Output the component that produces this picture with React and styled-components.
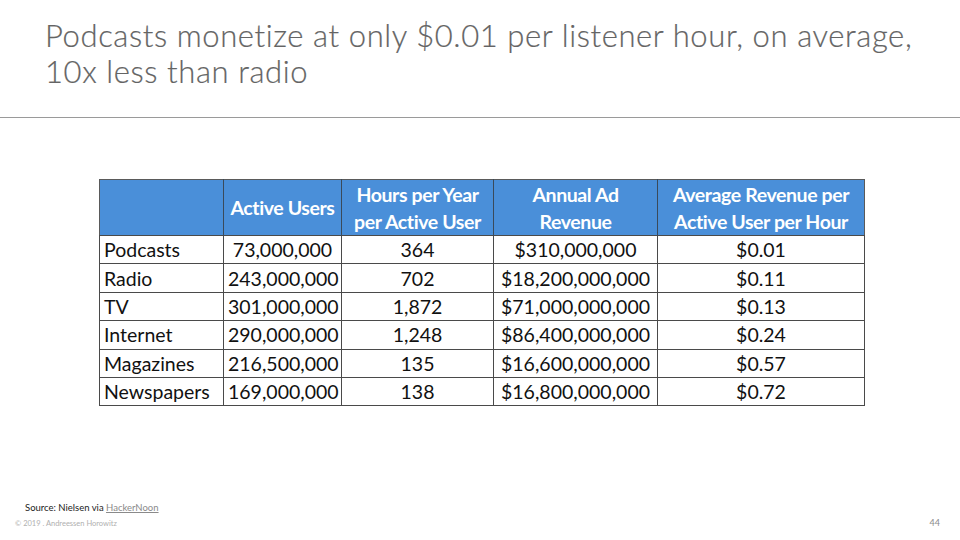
import styled, { createGlobalStyle } from 'styled-components';

const GlobalStyle = createGlobalStyle`
  html, body {
    margin: 0;
    padding: 0;
    background: #ffffff;
  }
`;

const rows = [
  ['Podcasts', '73,000,000', '364', '$310,000,000', '$0.01'],
  ['Radio', '243,000,000', '702', '$18,200,000,000', '$0.11'],
  ['TV', '301,000,000', '1,872', '$71,000,000,000', '$0.13'],
  ['Internet', '290,000,000', '1,248', '$86,400,000,000', '$0.24'],
  ['Magazines', '216,500,000', '135', '$16,600,000,000', '$0.57'],
  ['Newspapers', '169,000,000', '138', '$16,800,000,000', '$0.72'],
];

const headers = [
  [''],
  ['Active Users'],
  ['Hours per Year', 'per Active User'],
  ['Annual Ad', 'Revenue'],
  ['Average Revenue per', 'Active User per Hour'],
];

const widths = [124, 118, 152, 164, 207];

const App = () => (
  <Slide>
    <GlobalStyle />
    <TitleBar>
      <Title>
        Podcasts monetize at only $0.01 per listener hour, on average,
        <br />
        10x less than radio
      </Title>
    </TitleBar>
    <Body>
      <DataTable>
        <colgroup>
          {widths.map((w, i) => (
            <col key={i} style={{ width: w }} />
          ))}
        </colgroup>
        <thead>
          <tr>
            {headers.map((lines, i) => (
              <HeadCell key={i}>
                {lines.map((l, j) => (
                  <HeadLine key={j}>{l}</HeadLine>
                ))}
              </HeadCell>
            ))}
          </tr>
        </thead>
        <tbody>
          {rows.map(row => (
            <tr key={row[0]}>
              {row.map((cell, i) => (
                <Cell key={i} $first={i === 0}>
                  {cell}
                </Cell>
              ))}
            </tr>
          ))}
        </tbody>
      </DataTable>
    </Body>
    <Footer>
      <Source>
        Source: Nielsen via <SourceLink>HackerNoon</SourceLink>
      </Source>
      <BottomLine>
        <Copyright>© 2019 . Andreessen Horowitz</Copyright>
        <PageNumber>44</PageNumber>
      </BottomLine>
    </Footer>
  </Slide>
);

const Slide = styled.div`
  width: 960px;
  height: 540px;
  display: flex;
  flex-direction: column;
  background: #ffffff;
  overflow: hidden;
`;

const TitleBar = styled.header`
  height: 118px;
  border-bottom: 1px solid #9a9a9a;
  padding: 17px 0 0 45px;
  box-sizing: border-box;
`;

const Title = styled.h1`
  margin: 0;
  font-family: Lato, 'Open Sans', sans-serif;
  font-weight: 300;
  font-size: 31px;
  line-height: 36px;
  color: #646464;
  letter-spacing: 0.6px;
  -webkit-text-stroke: 0.2px #646464;
`;

const Body = styled.main`
  flex: 1;
  padding: 61px 0 0 99px;
`;

const DataTable = styled.table`
  border-collapse: collapse;
  table-layout: fixed;
  width: 765px;
  font-family: Lato, 'Open Sans', sans-serif;
  font-size: 19.5px;
  color: #111111;
  border: 1.5px solid #5a5a5a;
`;

const HeadCell = styled.th`
  height: 55px;
  padding: 0 2px;
  background: #4a8fd9;
  color: #ffffff;
  font-weight: 700;
  line-height: 27px;
  letter-spacing: -0.4px;
  text-align: center;
  white-space: nowrap;
  border-left: 1px solid #3a4a5a;
  &:first-child {
    border-left: none;
  }
`;

const HeadLine = styled.div`
  display: block;
`;

const Cell = styled.td`
  height: 27.4px;
  padding: 0 4px;
  line-height: 27px;
  text-align: ${p => (p.$first ? 'left' : 'center')};
  border: 1px solid #4a4a4a;
  white-space: nowrap;
`;

const Footer = styled.footer`
  display: flex;
  flex-direction: column;
  padding: 0 20px 12px 15px;
`;

const Source = styled.div`
  padding-left: 10px;
  font-family: Lato, 'Open Sans', sans-serif;
  font-size: 9.5px;
  color: #222222;
`;

const SourceLink = styled.span`
  color: #8a8a8a;
  text-decoration: underline;
`;

const BottomLine = styled.div`
  display: flex;
  justify-content: space-between;
  align-items: baseline;
  margin-top: 4px;
`;

const Copyright = styled.span`
  font-family: Lato, 'Open Sans', sans-serif;
  font-size: 7.5px;
  color: #b0b0b0;
`;

const PageNumber = styled.span`
  font-family: Lato, 'Open Sans', sans-serif;
  font-size: 9px;
  color: #8a8a8a;
`;

export default App;
